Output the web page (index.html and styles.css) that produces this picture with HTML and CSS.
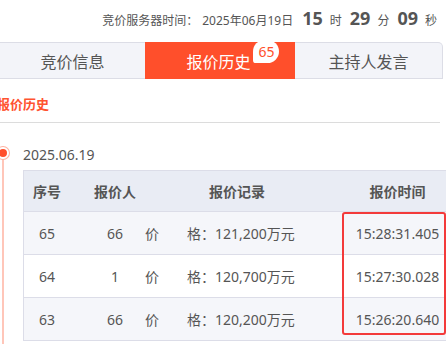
FILE: index.html
```html
<!DOCTYPE html>
<html lang="zh-CN">
<head>
    <meta charset="UTF-8">
    <meta name="viewport" content="width=device-width, initial-scale=1.0">
    <title>报价历史</title>
    <link rel="stylesheet" href="styles.css">
</head>
<body>
    <div class="page">
        <div class="server-time">
            <span>竞价服务器时间：</span>
            <span class="date">2025年06月19日</span>
            <b>15</b><span>时</span>
            <b>29</b><span>分</span>
            <b>09</b><span>秒</span>
        </div>

        <div class="tabs">
            <div class="tab">竞价信息</div>
            <div class="tab active"><span class="tab-label">报价历史<span class="badge">65</span></span></div>
            <div class="tab last">主持人发言</div>
        </div>

        <div class="section-title">报价历史</div>

        <div class="timeline">
            <span class="dot"></span>
            <div class="day">2025.06.19</div>
            <div class="table-wrap">
                <div class="bid-table">
                    <div class="row head">
                        <div>序号</div>
                        <div>报价人</div>
                        <div>报价记录</div>
                        <div>报价时间</div>
                    </div>
                    <div class="row">
                        <div>65</div>
                        <div>66</div>
                        <div class="record">价　　格：121,200万元</div>
                        <div>15:28:31.405</div>
                    </div>
                    <div class="row">
                        <div>64</div>
                        <div>1</div>
                        <div class="record">价　　格：120,700万元</div>
                        <div>15:27:30.028</div>
                    </div>
                    <div class="row">
                        <div>63</div>
                        <div>66</div>
                        <div class="record">价　　格：120,200万元</div>
                        <div>15:26:20.640</div>
                    </div>
                </div>
                <!-- 标注框 -->
                <div class="highlight"></div>
            </div>
        </div>
    </div>
</body>
</html>
```

FILE: styles.css
```css
body {
    margin: 0;
    font-family: "Noto Sans", "Noto Sans CJK SC", sans-serif;
    color: #555;
    background: #fff;
}

.page {
    width: 446px;
    height: 344px;
    overflow: hidden;
}

/* 服务器时间 */
.server-time {
    height: 42px;
    display: flex;
    align-items: baseline;
    justify-content: flex-end;
    padding-right: 9px;
    box-sizing: border-box;
    padding-top: 6px;
    font-size: 12px;
    line-height: 24px;
}

.server-time .date {
    margin-left: 4px;
}

.server-time b {
    font-size: 18px;
    margin: 0 7px 0 8px;
}

.server-time b:first-of-type {
    margin-left: 9px;
}

/* 标签页 */
.tabs {
    display: flex;
    height: 37px;
}

.tab {
    box-sizing: border-box;
    display: flex;
    align-items: center;
    justify-content: center;
    font-size: 16px;
    background: #f3f4f9;
    border-top: 1px solid #dcdde6;
    border-bottom: 1px solid #dcdde6;
}

.tab:first-child {
    width: 145px;
}

.tab.active {
    width: 150px;
    background: #ff4f2b;
    border-color: #ff4f2b;
    color: #fff;
    padding-right: 3px;
}

.tab.last {
    width: 148px;
    border-right: 1px solid #dcdde6;
    border-top-right-radius: 5px;
}

.tab-label {
    position: relative;
}

.badge {
    position: absolute;
    left: 67px;
    top: -9px;
    width: 26px;
    height: 23px;
    line-height: 23px;
    text-align: center;
    background: #fff;
    color: #ff4f2b;
    font-size: 14px;
    border-radius: 12px 12px 12px 3px;
}

/* 小标题 */
.section-title {
    width: 443px;
    margin-left: -3px;
    padding: 15px 0 8px;
    line-height: 20px;
    font-size: 13px;
    font-weight: 700;
    color: #ff5330;
    border-bottom: 1px solid #dcdcdc;
}

/* 时间线 */
.timeline {
    position: relative;
    padding: 23px 0 0 23px;
}

.timeline::before {
    content: "";
    position: absolute;
    left: 2px;
    top: 36px;
    bottom: -40px;
    width: 2px;
    background: #ffc6b9;
}

.dot {
    position: absolute;
    left: -3px;
    top: 24px;
    width: 8px;
    height: 8px;
    border-radius: 50%;
    background: #ff4f2b;
    border: 2px solid #fff;
    box-shadow: 0 0 0 1px #ffb3a1;
}

.day {
    font-size: 14px;
    line-height: 18px;
    margin-bottom: 6px;
}

.table-wrap {
    position: relative;
}

.bid-table {
    width: 457px;
    border-left: 1px solid #dcdde8;
    border-top: 1px solid #dcdde8;
    font-size: 14px;
}

.row {
    display: grid;
    grid-template-columns: 46px 90px 154px 167px;
    height: 43px;
    align-items: center;
    text-align: center;
    border-bottom: 1px solid #dcdde8;
    box-sizing: border-box;
    background: #f5f6fa;
}

.row:nth-child(odd) {
    background: #fff;
}

.row.head {
    height: 41px;
    background: #e9ecf4;
    font-weight: 700;
}

.record {
    text-align: left;
    white-space: nowrap;
    margin-left: -15px;
}

.highlight {
    position: absolute;
    left: 319px;
    top: 42px;
    width: 104px;
    height: 123px;
    box-sizing: border-box;
    border: 2px solid #f33a3a;
    border-radius: 3px;
}
```
